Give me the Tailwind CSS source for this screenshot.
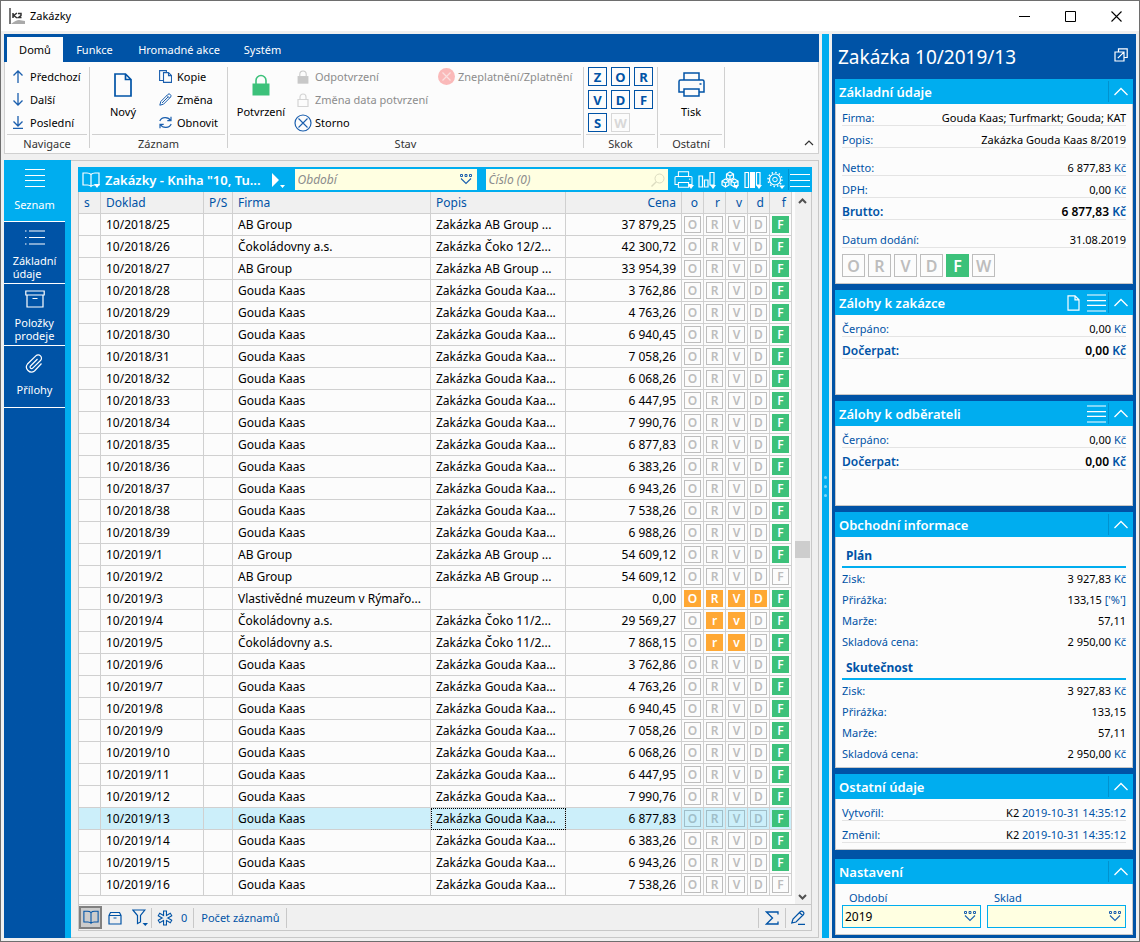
<!DOCTYPE html>
<html lang="cs">
<head>
<meta charset="utf-8">
<meta name="viewport" content="width=device-width, initial-scale=1">
<title>Zakázky</title>
<script src="https://cdn.jsdelivr.net/npm/@tailwindcss/browser@4"></script>
</head>
<body class="bg-[#f0f0f0] font-['Noto_Sans','Open_Sans',sans-serif] text-[11px] leading-[14px] text-black">

<svg class="hidden" aria-hidden="true">
  <symbol id="doc" viewBox="0 0 20 24"><path d="M2 1h10.500L18 6.500V23H2zM12.500 1v5.500H18" fill="none" stroke="currentColor" stroke-width="1.700"/></symbol>
  <symbol id="doc-thin" viewBox="0 0 13 16"><path d="M1 .8h7l4 4v10.400H1zM8 .8v4h4" fill="none" stroke="currentColor" stroke-width="1.200"/></symbol>
  <symbol id="lines" viewBox="0 0 20 18"><path d="M0 .5h20M0 6.500h20M0 11.500h20M0 17.500h20" stroke="currentColor" stroke-width="1.100"/></symbol>
  <symbol id="up" viewBox="0 0 22 22"><path d="M4.500 14l6.500-6.500 6.500 6.500" fill="none" stroke="currentColor" stroke-width="1.300"/></symbol>
  <symbol id="lock" viewBox="0 0 18 22"><path d="M4 10V6.500a5 5 0 0 1 10 0V10" fill="none" stroke="currentColor" stroke-width="1.600"/><rect x=".5" y="9.500" width="17" height="12" fill="currentColor"/></symbol>
  <symbol id="book" viewBox="0 0 18 16"><path d="M9 2.500Q7.500 1 5 1H1v12h4.500Q8 13 9 14.500 10 13 12.500 13H17V1h-4Q10.500 1 9 2.500zM9 2.500v12" fill="none" stroke="currentColor" stroke-width="1.200"/></symbol>
  <symbol id="printer" viewBox="0 0 27 25"><path d="M6 8V1h15v7M6 20H1V9.500Q1 8 2.500 8h22Q26 8 26 9.500V20h-5M6 17h15v7H6z" fill="none" stroke="currentColor" stroke-width="1.500"/><path d="M21.500 12h2" stroke="currentColor" stroke-width="1.500"/></symbol>
  <symbol id="combo" viewBox="0 0 12 11"><path d="M.5.5h2v2h-2zM5 .5h2v2H5zM9.500.5h2v2h-2z" fill="none" stroke="#1b5fae"/><path d="M1 4.500l5 5 5-5" fill="none" stroke="#1b5fae" stroke-width="1.100"/></symbol>
  <symbol id="box" viewBox="0 0 20 18"><path d="M.8 1h18.400v4H.8zM2 5v12h16V5M7.500 8.500h5" fill="none" stroke="currentColor" stroke-width="1.200"/></symbol>
</svg>

<div class="flex min-h-screen flex-col border border-[#6e6e6e]">

  <header class="flex h-[30px] items-center bg-white pl-2">
    <svg class="size-4" viewBox="0 0 16 16"><path d="M1 0v16" stroke="#777" stroke-width="2"/><path d="M4 5v5M8 5L4.800 7.500 8 10M9 5.500h3v2L9.500 9.500H12.500" fill="none" stroke="#333" stroke-width="1.500"/><path d="M2 16q5-4 8-4l6 1v3z" fill="#aaa"/></svg>
    <h1 class="ml-[5px] flex-1">Zakázky</h1>
    <button aria-label="Minimalizovat" class="flex h-full w-[46px] items-center justify-center"><svg class="size-[11px]" viewBox="0 0 11 11"><path d="M0 5.500h11" stroke="#000"/></svg></button>
    <button aria-label="Maximalizovat" class="flex h-full w-[46px] items-center justify-center"><svg class="size-[11px]" viewBox="0 0 11 11"><path d="M.5.5h10v10H.5z" fill="none" stroke="#000"/></svg></button>
    <button aria-label="Zavřít" class="flex h-full w-[46px] items-center justify-center"><svg class="size-[11px]" viewBox="0 0 11 11"><path d="M.5.5l10 10M10.500.5l-10 10" stroke="#000" stroke-width="1.100"/></svg></button>
  </header>

  <div class="flex flex-1 gap-[3px] p-[3px]">
    <div class="flex min-w-0 flex-1 flex-col">

      <!-- Ribbon -->
      <nav class="flex h-7 bg-[#0053a6] pt-[3px] pl-[3px] text-white">
        <button class="w-14 bg-[#fcfcfc] text-black">Domů</button>
        <button class="w-[63px]">Funkce</button>
        <button class="w-[106px]">Hromadné akce</button>
        <button class="w-[61px]">Systém</button>
      </nav>
      <div class="flex border border-t-0 border-[#d0d0d0] bg-[#fcfcfc] pt-[5px] pb-[5px]">
        <section class="flex h-[81px] w-[85px] flex-col border-r border-[#d0d0d0] px-[2px]">
          <div class="flex h-[68px] shrink-0 flex-col gap-1 border-b border-[#d0d0d0] pl-[5px]">
            <button class="flex h-[19px] items-center gap-[6px]"><svg class="h-[13px] w-3 text-[#1b5fae]" viewBox="0 0 12 13"><path d="M6 13V1M1.500 5.500L6 1l4.500 4.500" fill="none" stroke="currentColor" stroke-width="1.300"/></svg>Předchozí</button>
            <button class="flex h-[19px] items-center gap-[6px]"><svg class="h-[13px] w-3 text-[#1b5fae]" viewBox="0 0 12 13"><path d="M6 0v12M1.500 7.500L6 12l4.500-4.500" fill="none" stroke="currentColor" stroke-width="1.300"/></svg>Další</button>
            <button class="flex h-[19px] items-center gap-[6px]"><svg class="h-[13px] w-3 text-[#1b5fae]" viewBox="0 0 12 13"><path d="M6 0v10M1.500 5.500L6 10l4.500-4.500M1 12.300h10" fill="none" stroke="currentColor" stroke-width="1.300"/></svg>Poslední</button>
          </div>
          <h2 class="text-center leading-[18px] text-[#333]">Navigace</h2>
        </section>
        <section class="flex h-[81px] w-[138px] flex-col border-r border-[#d0d0d0] px-[2px]">
          <div class="flex h-[68px] shrink-0 border-b border-[#d0d0d0]">
            <button class="flex w-[62px] flex-col items-center pt-[6px]"><svg class="h-6 w-5 text-[#0053a6]"><use href="#doc"/></svg><span class="mt-2">Nový</span></button>
            <div class="flex flex-col gap-1 pl-[5px]">
              <button class="flex h-[19px] items-center gap-[5px]"><svg class="size-[13px] text-[#1b5fae]" viewBox="0 0 13 13"><path d="M4 10.500H.6V.6h6.800V2M4.500 2.600h5l3 3v6.800h-8zM9.500 2.600v3h3" fill="none" stroke="currentColor" stroke-width="1.100"/></svg>Kopie</button>
              <button class="flex h-[19px] items-center gap-[5px]"><svg class="size-[13px] text-[#1b5fae]" viewBox="0 0 13 13"><path d="M.8 12.200l1-3.700L9 1.300Q10 .3 11.300 1.500T11.700 4L4.500 11.200zM8 2.500L10.500 5M3 10l6-6" fill="none" stroke="currentColor"/></svg>Změna</button>
              <button class="flex h-[19px] items-center gap-[5px]"><svg class="size-[13px] text-[#1b5fae]" viewBox="0 0 13 13"><path d="M.8 5A5.800 5.200 0 0 1 11.500 4.500M12.200 8A5.800 5.200 0 0 1 1.500 8.500M12 .8v3.900H8.300M1 12.200V8.300h3.700" fill="none" stroke="currentColor" stroke-width="1.200"/></svg>Obnovit</button>
            </div>
          </div>
          <h2 class="text-center leading-[18px] text-[#333]">Záznam</h2>
        </section>
        <section class="flex h-[81px] w-[356px] flex-col border-r border-[#d0d0d0] px-[2px]">
          <div class="flex h-[68px] shrink-0 border-b border-[#d0d0d0]">
            <button class="flex w-[62px] flex-col items-center pt-[7px]"><svg class="h-[22px] w-[18px] text-[#3cc17a]"><use href="#lock"/></svg><span class="mt-[9px]">Potvrzení</span></button>
            <div class="flex w-[146px] flex-col gap-1 pl-[2px] text-[#8c8c8c]">
              <button disabled class="flex h-[19px] items-center gap-[3px] whitespace-nowrap"><span class="flex w-[18px] justify-center"><svg class="h-[14px] w-3 text-[#c8c8c8]"><use href="#lock"/></svg></span>Odpotvrzení</button>
              <button disabled class="flex h-[19px] items-center gap-[3px] whitespace-nowrap"><span class="flex w-[18px] justify-center"><svg class="h-[14px] w-3" viewBox="0 0 12 14"><path d="M1 6.500h10v7H1zM3 6V4a3 3 0 0 1 6 0v2" fill="none" stroke="#d4d4d4" stroke-width="1.200"/></svg></span>Změna data potvrzení</button>
              <button class="flex h-[19px] items-center gap-[3px] text-black"><svg class="size-[18px]" viewBox="0 0 18 18"><circle cx="9" cy="9" r="8" fill="none" stroke="#1b5fae" stroke-width="1.200"/><path d="M4.500 4.500l9 9M13.500 4.500l-9 9" stroke="#1b5fae" stroke-width="1.100"/></svg>Storno</button>
            </div>
            <div class="text-[#8c8c8c]">
              <button disabled class="flex h-[19px] items-center gap-[3px] whitespace-nowrap"><svg class="size-[17px]" viewBox="0 0 17 17"><circle cx="8.500" cy="8.500" r="8.500" fill="#fab9b9"/><path d="M4.500 4.500l8 8M12.500 4.500l-8 8" stroke="#fbe0e0" stroke-width="1.200"/></svg>Zneplatnění/Zplatnění</button>
            </div>
          </div>
          <h2 class="text-center leading-[18px] text-[#333]">Stav</h2>
        </section>
        <section class="flex h-[81px] w-[74px] flex-col border-r border-[#d0d0d0] px-[2px]">
          <div id="jumps" class="grid h-[68px] shrink-0 grid-cols-[19px_19px_19px] content-start gap-1 border-b border-[#d0d0d0] pl-[2px]"></div>
          <h2 class="text-center leading-[18px] text-[#333]">Skok</h2>
        </section>
        <section class="flex h-[81px] w-[67px] flex-col border-r border-[#d0d0d0] px-[2px]">
          <div class="flex h-[68px] shrink-0 justify-center border-b border-[#d0d0d0]">
            <button class="flex flex-col items-center pt-[5px]"><svg class="h-[25px] w-[27px] text-[#0053a6]"><use href="#printer"/></svg><span class="mt-2">Tisk</span></button>
          </div>
          <h2 class="text-center leading-[18px] text-[#333]">Ostatní</h2>
        </section>
        <button aria-label="Sbalit pás karet" class="mr-1 mb-[2px] ml-auto self-end"><svg class="h-[6px] w-[10px]" viewBox="0 0 10 6"><path d="M1 5l4-4 4 4" fill="none" stroke="#333" stroke-width="1.200"/></svg></button>
      </div>

      <div class="mt-[6px] flex flex-1">
        <!-- Section switcher -->
        <nav class="w-[67px] bg-[#00adef] text-white">
          <div class="flex h-full flex-col bg-[#0053a6] bg-linear-to-r from-[#0053a6] from-[61px] to-[#00adef] to-[61px]">
            <button class="flex h-[61px] flex-col items-center bg-[#00adef] pt-[6px]"><span class="flex h-6 items-center pr-[6px]"><svg class="h-[18px] w-5"><use href="#lines"/></svg></span><span class="mt-2 pr-[6px]">Seznam</span></button>
            <button class="flex h-[62px] w-[61px] flex-col items-center border-t border-white pt-[3px]"><span class="flex h-6 items-center"><svg class="h-[15px] w-5" viewBox="0 0 20 15"><path d="M0 1h1.500M4 1h16M0 7.500h1.500M4 7.500h16M0 14h1.500M4 14h16" stroke="currentColor" stroke-width="1.200"/></svg></span><span class="mt-[5px] text-left leading-[13px]">Základní<br>údaje</span></button>
            <button class="flex h-[62px] w-[61px] flex-col items-center border-t border-white pt-[3px]"><span class="flex h-6 items-center"><svg class="h-[18px] w-5"><use href="#box"/></svg></span><span class="mt-[5px] text-left leading-[13px]">Položky<br>prodeje</span></button>
            <button class="flex h-[63px] w-[61px] flex-col items-center border-y border-white pt-[6px]"><span class="flex h-6 items-center"><svg class="size-5" viewBox="0 0 20 20"><path d="M13.500 5.500L6.500 12.500a1.500 1.500 0 0 0 2.200 2.200L16.500 7a3.300 3.300 0 0 0-4.700-4.700L3.500 10.500a5 5 0 0 0 7 7L17.500 10" transform="translate(-1 -.5)" fill="none" stroke="currentColor" stroke-width="1.200"/></svg></span><span class="mt-[7px]">Přílohy</span></button>
          </div>
        </nav>

        <main class="flex min-w-0 flex-1 flex-col border-y border-r border-[#c8c8c8] pt-[6px] pr-[6px] pb-[6px] pl-[7px]">
          <!-- Grid toolbar -->
          <div class="flex h-[25px] items-center bg-[#00adef] text-white">
            <button aria-label="Kniha" class="relative ml-1 flex"><svg class="h-4 w-[18px]"><use href="#book"/></svg><svg class="absolute top-3 left-3 h-1 w-[6px]" viewBox="0 0 6 4"><path d="M0 0h6L3 4z" fill="#fff"/></svg></button>
            <h2 class="ml-[5px] text-[13px] leading-[18px] font-semibold whitespace-nowrap">Zakázky - Kniha "10, Tu...</h2>
            <button aria-label="Další kniha" class="ml-[10px] flex items-end"><svg class="h-[16px] w-[15px]" viewBox="0 0 15 16"><path d="M1 1l7 7-7 7zM9 13h5l-2.500 3z" fill="#fff"/></svg></button>
            <div class="ml-[9px] flex h-[21px] w-[182px] items-center bg-[#ffffe1] pr-[5px]"><input aria-label="Období" placeholder="Období" class="min-w-0 flex-1 pl-[3px] text-[12px] text-black italic placeholder:text-[#8c8c8c]"><svg class="h-[11px] w-3"><use href="#combo"/></svg></div>
            <div class="ml-[9px] flex h-[21px] min-w-0 flex-1 items-center bg-[#ffffe1] pr-[3px]"><input aria-label="Číslo" placeholder="Číslo (0)" class="min-w-0 flex-1 pl-[3px] text-[12px] text-black italic placeholder:text-[#8c8c8c]"><svg class="size-[14px]" viewBox="0 0 14 14"><circle cx="8.500" cy="5.500" r="4.500" fill="none" stroke="#dcdcc0"/><path d="M5.300 8.700L.5 13.500" stroke="#dcdcc0" stroke-width="1.400"/></svg></div>
            <div class="flex items-center gap-[5px] pl-[6px]">
              <button aria-label="Tisk" class="relative flex"><svg class="h-[17px] w-[19px]"><use href="#printer"/></svg><svg class="absolute top-[14px] left-[14px] h-1 w-[6px]" viewBox="0 0 6 4"><path d="M0 0h6L3 4z" fill="#fff"/></svg></button>
              <button aria-label="Graf"><svg class="h-[18px] w-[18px]" viewBox="0 0 18 18"><path d="M1 5h3.500v11H1zM6.500 9H10v7H6.500zM12 1.500h4V14h-4z" fill="none" stroke="#fff" stroke-width="1.200"/><path d="M12 14h6l-3 4z" fill="#fff"/></svg></button>
              <button aria-label="Kostky"><svg class="h-[18px] w-[18px]" viewBox="0 0 18 18"><path d="M9 1l3.500 2v4L9 9 5.500 7V3zM5.500 3L9 5l3.500-2M9 5v4M4.500 8L8 10v4l-3.500 2L1 14v-4zM1 10l3.500 2L8 10M4.500 12v4M13.500 8l3.500 2v4l-3.500 2-3.500-2v-4zM10 10l3.500 2 3.500-2M13.500 12v4" fill="none" stroke="#fff" stroke-width="1.200"/><path d="M12.500 14h5.500l-2.700 4z" fill="#fff"/></svg></button>
              <button aria-label="Sloupce"><svg class="h-[18px] w-[18px]" viewBox="0 0 18 18"><path d="M1 1.500h3.500v15H1zM12.500 1.500H16V14h-3.500z" fill="none" stroke="#fff" stroke-width="1.200"/><path d="M6 1h5v16H6zM12 14h6l-3 4z" fill="#fff"/></svg></button>
              <button aria-label="Nastavení tabulky"><svg class="h-[18px] w-[18px]" viewBox="0 0 18 18"><circle cx="8" cy="8.500" r="5.500" fill="none" stroke="#fff" stroke-width="1.200"/><circle cx="8" cy="8.500" r="2.300" fill="none" stroke="#fff"/><circle cx="8" cy="8.500" r="7" fill="none" stroke="#fff" stroke-width="1.500" stroke-dasharray="1.500 2.165"/><path d="M12 14.500h6l-3 3.500z" fill="#fff"/></svg></button>
            </div>
            <button aria-label="Nabídka" class="ml-[3px] flex h-[21px] items-center border-l border-[#0092cf] pr-[2px] pl-[1px]"><svg class="h-[14px] w-5" viewBox="0 0 20 14"><path d="M0 1.500h20M0 7.500h20M0 13.500h20" stroke="#fff" stroke-width="1.100"/></svg></button>
          </div>

          <div class="flex flex-1 border-x border-[#c8c8c8] bg-[#fcfcfc]">
            <div class="min-w-0 flex-1">
              <table class="w-full table-fixed border-separate border-spacing-0 text-[12px] leading-[17px]">
                <colgroup><col class="w-[22px]"><col class="w-[103px]"><col class="w-[29px]"><col><col class="w-[135px]"><col class="w-[116px]"><col class="w-[22px]"><col class="w-[22px]"><col class="w-[22px]"><col class="w-[22px]"><col class="w-[22px]"></colgroup>
                <thead><tr id="head" class="h-[22px] bg-[#f0f0f0] text-left text-[#0053a6]"></tr></thead>
                <tbody id="rows"></tbody>
              </table>
            </div>
            <div class="ml-[3px] flex w-4 flex-col items-center justify-between bg-[#f0f0f0] pt-[6px] pr-[1px] pb-1" aria-hidden="true">
              <svg class="h-[6px] w-[9px]" viewBox="0 0 9 6"><path d="M1 5l3.500-3.500L8 5" fill="none" stroke="#505050" stroke-width="2"/></svg>
              <div class="h-[17px] w-[15px] bg-[#cdcdcd]"></div>
              <svg class="h-[6px] w-[9px]" viewBox="0 0 9 6"><path d="M1 1l3.500 3.500L8 1" fill="none" stroke="#505050" stroke-width="2"/></svg>
            </div>
          </div>

          <!-- Status bar -->
          <footer class="flex h-[27px] items-center border border-[#c8c8c8] text-[#0053a6]">
            <button aria-label="Kniha" class="flex h-[23px] w-[23px] items-center justify-center border-2 border-[#808080] bg-[#cccccc]"><svg class="h-[15px] w-4"><use href="#book"/></svg></button>
            <button aria-label="Archiv" class="ml-[6px]"><svg class="size-[14px]" viewBox="0 0 14 14"><path d="M1 4.500L2.500 1.500h9L13 4.500V13H1zM1 4.500h12M5.500 7h3" fill="none" stroke="currentColor" stroke-width="1.200"/></svg></button>
            <button aria-label="Filtr" class="ml-[10px]"><svg class="h-[17px] w-4" viewBox="0 0 16 17"><path d="M.8 1h12L8.500 6.500v6.500L5.500 14.500v-8z" fill="none" stroke="currentColor" stroke-width="1.200"/><path d="M10.500 14H16l-2.700 3z" fill="currentColor"/></svg></button>
            <button class="ml-[3px] flex h-5 items-center border-l border-[#c8c8c8] pl-[5px]"><svg class="mr-2 size-4" viewBox="0 0 16 16"><path d="M8 .5v15M1.500 4.250l13 7.500M14.500 4.250l-13 7.500" stroke="currentColor" stroke-width="4"/><path d="M8 1.500v13M2.400 4.750l11.200 6.500M13.600 4.750L2.400 11.250" stroke="#f0f0f0" stroke-width="1.800"/></svg>0</button>
            <button class="ml-[6px] flex h-5 items-center border-x border-[#c8c8c8] px-[7px]">Počet záznamů</button>
            <button aria-label="Součet" class="ml-auto flex h-5 items-center border-l border-[#c8c8c8] px-[6px]"><svg class="size-[14px]" viewBox="0 0 14 14"><path d="M13 3.500V1H1.500l6 6-6 6H13v-2.500" fill="none" stroke="currentColor" stroke-width="1.300"/></svg></button>
            <button aria-label="Upravit" class="flex h-5 items-center border-l border-[#c8c8c8] px-[5px]"><svg class="size-[15px]" viewBox="0 0 15 15"><path d="M.8 13l1.200-4L9.500 1.500Q10.500.5 12 1.700T12.500 4.500L5 12zM8.500 2.500l3 3M7 14.300h7" fill="none" stroke="currentColor" stroke-width="1.200"/></svg></button>
          </footer>
        </main>
      </div>
    </div>

    <!-- Splitter -->
    <div class="flex w-[7px] flex-col items-center justify-center gap-[6px] bg-[#00adef]" aria-hidden="true">
      <i class="size-[3px] rounded-full bg-[#7fd6f7]"></i><i class="size-[3px] rounded-full bg-[#7fd6f7]"></i><i class="size-[3px] rounded-full bg-[#7fd6f7]"></i>
    </div>

    <!-- Detail panel -->
    <aside class="w-[304px] bg-[#0053a6] px-[3px]">
      <div class="flex h-[45px] items-center justify-between pr-[5px] pl-[3px] text-white">
        <h2 class="text-[19px] leading-6">Zakázka 10/2019/13</h2>
        <button aria-label="Otevřít v novém okně" class="mb-1"><svg class="size-[14px]" viewBox="0 0 14 14"><path d="M4.500 3.500V.8h8.700v8.700H10.500M7.500 4H1v9h9V7M3.800 10.200L9.700 4.300M6 4h4v4" fill="none" stroke="currentColor" stroke-width="1.200"/></svg></button>
      </div>
      <div id="panels"></div>
    </aside>
  </div>
</div>

<script>
const badgeOff = 'border border-[#bdbdbd] text-[#bdbdbd]';
const badgeOffSelected = 'border border-[#a0bec8] text-[#a0bec8]';
const badgeGreen = 'bg-[#3cc17a] text-white';
const badgeOrange = 'bg-[#ffa834] text-white';

document.getElementById('jumps').innerHTML = [...'ZORVDFSW'].map(l =>
  `<button class="flex size-[19px] items-center justify-center border text-[13px] font-bold ${l === 'W' ? 'border-[#d8d8d8] text-[#d8d8d8]' : 'border-[#0053a6] text-[#0053a6]'}" ${l === 'W' ? 'disabled' : ''}>${l}</button>`).join('');

document.getElementById('head').innerHTML = ['s', 'Doklad', 'P/S', 'Firma', 'Popis', 'Cena', 'o', 'r', 'v', 'd', 'f'].map((h, i) =>
  `<th class="border-r border-b border-[#d0d0d0] px-[5px] py-0 font-normal ${i > 4 ? 'text-right' : ''}">${h}</th>`).join('');

// [document, company, description, price, status letters]; + marks orange, F green, f unset
const G = 'Gouda Kaas', GP = 'Zakázka Gouda Kaa...', A = 'AB Group', AP = 'Zakázka AB Group ...', C = 'Čokoládovny a.s.';
const rows = [
  ['2018/25', A, AP, '37 879,25'], ['2018/26', C, 'Zakázka Čoko 12/2...', '42 300,72'], ['2018/27', A, AP, '33 954,39'],
  ['2018/28', G, GP, '3 762,86'], ['2018/29', G, GP, '4 763,26'], ['2018/30', G, GP, '6 940,45'], ['2018/31', G, GP, '7 058,26'],
  ['2018/32', G, GP, '6 068,26'], ['2018/33', G, GP, '6 447,95'], ['2018/34', G, GP, '7 990,76'], ['2018/35', G, GP, '6 877,83'],
  ['2018/36', G, GP, '6 383,26'], ['2018/37', G, GP, '6 943,26'], ['2018/38', G, GP, '7 538,26'], ['2018/39', G, GP, '6 988,26'],
  ['2019/1', A, AP, '54 609,12'], ['2019/2', A, AP, '54 609,12', 'ORVDf'],
  ['2019/3', 'Vlastivědné muzeum v Rýmařo...', '', '0,00', '+O+R+V+DF'],
  ['2019/4', C, 'Zakázka Čoko 11/2...', '29 569,27', 'O+r+vDF'], ['2019/5', C, 'Zakázka Čoko 11/2...', '7 868,15', 'O+r+vDF'],
  ['2019/6', G, GP, '3 762,86'], ['2019/7', G, GP, '4 763,26'], ['2019/8', G, GP, '6 940,45'], ['2019/9', G, GP, '7 058,26'],
  ['2019/10', G, GP, '6 068,26'], ['2019/11', G, GP, '6 447,95'], ['2019/12', G, GP, '7 990,76'], ['2019/13', G, GP, '6 877,83'],
  ['2019/14', G, GP, '6 383,26'], ['2019/15', G, GP, '6 943,26'], ['2019/16', G, GP, '7 538,26', 'ORVDf']
];
document.getElementById('rows').innerHTML = rows.map(([doc, firm, desc, price, flags = 'ORVDF']) => {
  const selected = doc === '2019/13';
  const cell = 'border-r border-b border-[#d0d0d0] px-[5px] py-0 whitespace-nowrap overflow-hidden';
  const badges = flags.match(/\+?[A-Za-z]/g).map(f => {
    const style = f[0] === '+' ? badgeOrange : f === 'F' ? badgeGreen : selected ? badgeOffSelected : badgeOff;
    const letter = f === 'f' ? 'F' : f.slice(-1);
    return `<td class="border-r border-b border-[#d0d0d0] p-[2px]"><span class="flex size-[17px] items-center justify-center text-[12px] leading-[15px] font-semibold ${style}">${letter}</span></td>`;
  }).join('');
  return `<tr class="h-[22px] ${selected ? 'bg-[#cceffa]' : ''}"><td class="${cell}"></td><td class="${cell}">10/${doc}</td><td class="${cell}"></td><td class="${cell}">${firm}</td><td class="${cell} ${selected ? 'outline-1 -outline-offset-1 outline-dotted outline-black' : ''}">${desc}</td><td class="${cell} text-right">${price}</td>${badges}</tr>`;
}).join('');

const lineBtn = '<button aria-label="Seznam" class="flex"><svg class="h-[18px] w-[19px]"><use href="#lines"/></svg></button>';
const docBtn = '<button aria-label="Nový doklad" class="flex"><svg class="h-4 w-[13px]"><use href="#doc-thin"/></svg></button>';
const row = (label, value, unit = '', bold = false) =>
  `<div class="flex h-[22px] items-center justify-between border-b border-[#e4e4e4] pt-[6px] ${bold ? 'text-[12px] font-semibold' : ''}"><dt class="text-[#0053a6]">${label}</dt><dd>${value}<span class="text-[#0053a6]">${unit}</span></dd></div>`;
const plain = (label, value, unit = '') =>
  `<div class="flex h-[21px] items-center justify-between"><dt class="text-[#0053a6]">${label}</dt><dd>${value}<span class="text-[#0053a6]">${unit}</span></dd></div>`;
const group = (title, top, lines) =>
  `<h4 class="${top} border-b-2 border-[#00adef] pb-[2px] pl-1 text-[12px] leading-[17px] font-bold text-[#0053a6]">${title}</h4><dl>${lines}</dl>`;
const panel = (title, height, body, tools = '', gap = 'mb-[6px]') => `
  <section class="${gap}">
    <div class="flex h-[25px] items-center bg-[#00adef] pl-1 text-white">
      <h3 class="flex-1 text-[13px] leading-[18px] font-semibold">${title}</h3>
      <div class="flex items-center gap-[7px] pr-[2px]">${tools}</div>
      <button aria-label="Sbalit" class="flex h-[21px] items-center border-l border-[#0092cf] px-[1px]"><svg class="size-[22px]"><use href="#up"/></svg></button>
    </div>
    <div class="${height} border border-t-0 border-[#c8c8c8] bg-[#fcfcfc] px-[6px]">${body}</div>
  </section>`;
const advances = `<dl>${row('Čerpáno:', '0,00', ' Kč')}${row('Dočerpat:', '0,00', ' Kč', true)}</dl>`;
const field = (label, value, id) =>
  `<div><label for="${id}" class="block pl-[7px] text-[#0053a6]">${label}</label><div class="flex h-[23px] items-center border border-[#00adef] bg-[#ffffe1] pr-1"><input id="${id}" value="${value}" class="w-0 min-w-0 flex-1 pl-[2px] text-[12px]"><svg class="h-[11px] w-3"><use href="#combo"/></svg></div></div>`;
const flagsBar = [...'ORVDFW'].map(l =>
  `<span class="flex size-[23px] items-center justify-center text-[16px] font-semibold ${l === 'F' ? 'bg-[#3cc17a] text-white' : 'border border-[#bdbdbd] text-[#bdbdbd]'}">${l}</span>`).join('');

document.getElementById('panels').innerHTML =
  panel('Základní údaje', 'min-h-[180px]',
    `<dl>${row('Firma:', 'Gouda Kaas; Turfmarkt; Gouda; KAT')}${row('Popis:', 'Zakázka Gouda Kaas 8/2019')}</dl>
     <dl class="mt-[6px]">${row('Netto:', '6 877,83', ' Kč')}${row('DPH:', '0,00', ' Kč')}${row('Brutto:', '6 877,83', ' Kč', true)}</dl>
     <dl class="mt-[6px]">${row('Datum dodání:', '31.08.2019')}</dl>
     <div class="mt-[6px] flex gap-[3px]">${flagsBar}</div>`) +
  panel('Zálohy k zakázce', 'min-h-20', advances, docBtn + lineBtn) +
  panel('Zálohy k odběrateli', 'min-h-20', advances, lineBtn) +
  panel('Obchodní informace', 'min-h-[231px]',
    group('Plán', 'pt-[10px]', plain('Zisk:', '3 927,83', ' Kč') + plain('Přirážka:', '133,15', " ['%']") + plain('Marže:', '57,11') + plain('Skladová cena:', '2 950,00', ' Kč')) +
    group('Skutečnost', 'pt-[7px]', plain('Zisk:', '3 927,83', ' Kč') + plain('Přirážka:', '133,15') + plain('Marže:', '57,11') + plain('Skladová cena:', '2 950,00', ' Kč'))) +
  panel('Ostatní údaje', 'min-h-[51px]',
    `<dl>${row('Vytvořil:', 'K2', ' 2019-10-31 14:35:12')}${row('Změnil:', 'K2', ' 2019-10-31 14:35:12')}</dl>`, '', 'mb-[9px]') +
  panel('Nastavení', 'min-h-[51px]',
    `<div class="grid grid-cols-2 gap-[6px] pt-[7px]">${field('Období', '2019', 'period')}${field('Sklad', '', 'stock')}</div>`, '', 'mb-[3px]');
</script>
</body>
</html>
